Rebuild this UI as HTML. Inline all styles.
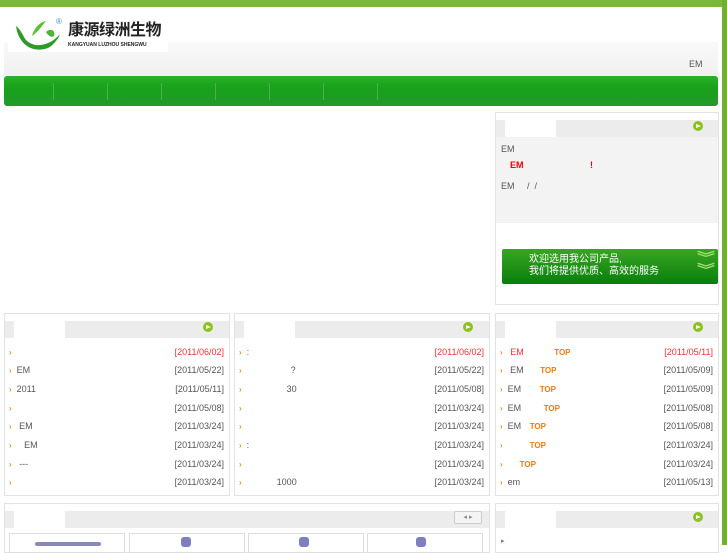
<!DOCTYPE html><html><head><meta charset="utf-8"><style>
*{margin:0;padding:0;box-sizing:border-box}
body{width:727px;height:545px;overflow:hidden;background:#fff;position:relative;font-family:"Liberation Sans","Noto Sans CJK SC",sans-serif;font-size:9px;color:#555}
.a{position:absolute}
.box{position:absolute;border:1px solid #e2e2e2;background:#fff}
.hd{position:absolute;left:0;right:0;top:7px;height:17px;background:#ececec}
.tab{position:absolute;left:9px;top:5px;width:51px;height:19px;background:#fff;border-radius:4px 4px 0 0}
.more{position:absolute;top:8px;width:10px;height:10px;border-radius:50%;background:#8cc21e}
.more:after{content:"";position:absolute;left:3px;top:2.5px;border-left:5px solid #fff;border-top:2.5px solid transparent;border-bottom:2.5px solid transparent}
.row{position:absolute;left:4px;right:5px;height:18px;line-height:18px}
.row b{color:#f08a1c;font-size:8px;margin-right:5px}
.row .d{position:absolute;right:0;top:0}
.red{color:#e33}
.top{color:#f07a10;font-weight:bold;font-size:8px}
</style></head><body>
<div class="a" style="left:0;top:0;width:727px;height:7px;background:#7ab83a"></div>
<div class="a" style="left:722px;top:0;width:5px;height:545px;background:#72b033"></div>
<div class="a" style="left:4px;top:42px;width:714px;height:34px;background:linear-gradient(#f9f9f9,#f0f0f0)"></div>
<div class="a" style="left:8px;top:14px;width:160px;height:38px;background:#fff"></div>
<svg class="a" style="left:12px;top:18px" width="50" height="36" viewBox="0 0 50 36"><path d="M2 6 C8 10 10 22 18 30 C12 20 10 12 2 6Z" fill="#3aa52a"/><path d="M4 8 C6 24 18 36 36 30 C40 28 46 22 48 16 C40 26 24 32 14 22 C10 18 8 12 4 8Z" fill="#2e9a2a"/><path d="M20 18 C22 10 28 4 34 3 C30 8 26 14 20 18Z" fill="#5cbf3a"/><path d="M34 14 C38 10 44 12 42 18 C40 20 36 18 34 14Z" fill="#4fb534"/></svg>
<div class="a" style="left:56px;top:17px;color:#3a8fd0;font-size:8px">®</div>
<div class="a" style="left:68px;top:22px;font-size:16px;line-height:18px;font-weight:bold;color:#222;letter-spacing:-0.5px">康源绿洲生物</div>
<div class="a" style="left:68px;top:42px;font-size:5px;line-height:6px;font-weight:bold;color:#222;white-space:nowrap">KANGYUAN LUZHOU SHENGWU</div>
<div class="a" style="left:689px;top:59px;font-size:9px;color:#555">EM</div>
<div class="a" style="left:4px;top:76px;width:714px;height:30px;border-radius:3px;background:linear-gradient(#2bb02a,#18a11a 40%,#239a2b)"></div>
<div class="a" style="left:53px;top:83px;width:378px;height:17px;border-left:1px solid #46b548;background:repeating-linear-gradient(90deg,transparent 0 53px,#46b548 53px 54px)"></div>
<!-- right top box -->
<div class="box" style="left:495px;top:112px;width:224px;height:193px;">
<div class="hd"></div><div class="tab"></div><div class="more" style="left:197px"></div>
<div class="a" style="left:0;top:24px;width:222px;height:86px;background:#f3f3f3"></div>
<div class="a" style="left:5px;top:31px">EM</div>
<div class="a" style="left:14px;top:47px;color:#e00;font-weight:bold">EM</div>
<div class="a" style="left:94px;top:47px;color:#e00;font-weight:bold">!</div>
<div class="a" style="left:5px;top:68px">EM &nbsp; &nbsp; / &nbsp;/</div>
<div class="a" style="left:6px;top:136px;width:216px;height:35px;background:linear-gradient(#3aa524,#087f0c);border-radius:2px"></div>
<div class="a" style="left:33px;top:141px;color:#fff;font-size:10px;line-height:12px">欢迎选用我公司产品,<br>我们将提供优质、高效的服务</div>
<div class="a" style="left:203px;top:139px;color:#9fe070;font-size:14px;line-height:12px;font-weight:bold;transform:scaleX(1.3)">︾<br>︾</div>
</div>
<!-- list boxes -->
<div class="box" style="left:4px;top:313px;width:226px;height:183px">
<div class="hd"></div><div class="tab"></div><div class="more" style="left:198px"></div>
<div class="row" style="top:29px"><b>›</b><span class="d red">[2011/06/02]</span></div>
<div class="row" style="top:47px"><b>›</b>EM<span class="d">[2011/05/22]</span></div>
<div class="row" style="top:66px"><b>›</b>2011<span class="d">[2011/05/11]</span></div>
<div class="row" style="top:85px"><b>›</b><span class="d">[2011/05/08]</span></div>
<div class="row" style="top:103px"><b>›</b> EM<span class="d">[2011/03/24]</span></div>
<div class="row" style="top:122px"><b>›</b> &nbsp; EM<span class="d">[2011/03/24]</span></div>
<div class="row" style="top:141px"><b>›</b> ---<span class="d">[2011/03/24]</span></div>
<div class="row" style="top:159px"><b>›</b><span class="d">[2011/03/24]</span></div>
</div>
<div class="box" style="left:234px;top:313px;width:256px;height:183px">
<div class="hd"></div><div class="tab"></div><div class="more" style="left:228px"></div>
<div class="row" style="top:29px"><b>›</b><span class="red">:</span><span class="d red">[2011/06/02]</span></div>
<div class="row" style="top:47px"><b>›</b><span style="margin-left:44px">?</span><span class="d">[2011/05/22]</span></div>
<div class="row" style="top:66px"><b>›</b><span style="margin-left:40px">30</span><span class="d">[2011/05/08]</span></div>
<div class="row" style="top:85px"><b>›</b><span class="d">[2011/03/24]</span></div>
<div class="row" style="top:103px"><b>›</b><span class="d">[2011/03/24]</span></div>
<div class="row" style="top:122px"><b>›</b>:<span class="d">[2011/03/24]</span></div>
<div class="row" style="top:141px"><b>›</b><span class="d">[2011/03/24]</span></div>
<div class="row" style="top:159px"><b>›</b><span style="margin-left:30px">1000</span><span class="d">[2011/03/24]</span></div>
</div>
<div class="box" style="left:495px;top:313px;width:224px;height:183px">
<div class="hd"></div><div class="tab"></div><div class="more" style="left:197px"></div>
<div class="row" style="top:29px"><b>›</b> <span class="red">EM</span> <span class="top" style="margin-left:28px">TOP</span><span class="d red">[2011/05/11]</span></div>
<div class="row" style="top:47px"><b>›</b> EM <span class="top" style="margin-left:14px">TOP</span><span class="d">[2011/05/09]</span></div>
<div class="row" style="top:66px"><b>›</b>EM <span class="top" style="margin-left:16px">TOP</span><span class="d">[2011/05/09]</span></div>
<div class="row" style="top:85px"><b>›</b>EM <span class="top" style="margin-left:20px">TOP</span><span class="d">[2011/05/08]</span></div>
<div class="row" style="top:103px"><b>›</b>EM <span class="top" style="margin-left:6px">TOP</span><span class="d">[2011/05/08]</span></div>
<div class="row" style="top:122px"><b>›</b><span class="top" style="margin-left:22px">TOP</span><span class="d">[2011/03/24]</span></div>
<div class="row" style="top:141px"><b>›</b><span class="top" style="margin-left:12px">TOP</span><span class="d">[2011/03/24]</span></div>
<div class="row" style="top:159px"><b>›</b>em<span class="d">[2011/05/13]</span></div>
</div>
<!-- bottom -->
<div class="box" style="left:4px;top:503px;width:486px;height:50px">
<div class="hd"></div><div class="tab"></div>
<div class="a" style="left:449px;top:7px;width:28px;height:13px;border:1px solid #ccc;border-radius:2px;background:#f4f4f4;font-size:7px;color:#888;line-height:11px;text-align:center">◂ ▸</div>
<div class="a" style="left:4px;top:29px;width:116px;height:20px;border:1px solid #ddd"></div>
<div class="a" style="left:124px;top:29px;width:116px;height:20px;border:1px solid #ddd"></div>
<div class="a" style="left:243px;top:29px;width:116px;height:20px;border:1px solid #ddd"></div>
<div class="a" style="left:362px;top:29px;width:116px;height:20px;border:1px solid #ddd"></div>
<div class="a" style="left:30px;top:38px;width:66px;height:4px;background:#8888bb;border-radius:2px"></div>
<div class="a" style="left:176px;top:33px;width:10px;height:10px;background:#7f7fc0;border-radius:3px"></div>
<div class="a" style="left:294px;top:33px;width:10px;height:10px;background:#7f7fc0;border-radius:3px"></div>
<div class="a" style="left:411px;top:33px;width:10px;height:10px;background:#7f7fc0;border-radius:3px"></div>
</div>
<div class="box" style="left:495px;top:503px;width:224px;height:50px">
<div class="hd"></div><div class="tab"></div><div class="more" style="left:197px"></div>
<div class="a" style="left:5px;top:33px;font-size:7px;color:#777">▸</div>
</div>
</body></html>
